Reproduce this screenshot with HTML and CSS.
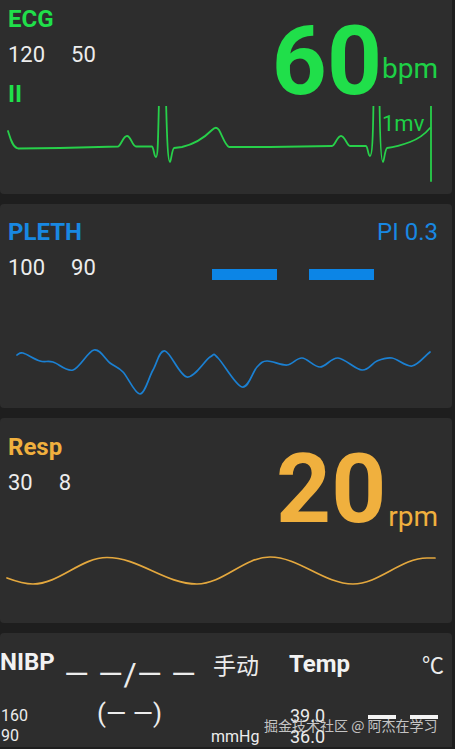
FILE: index.html
```html
<!DOCTYPE html>
<html lang="zh">
<head>
<meta charset="utf-8">
<title>Monitor</title>
<link rel="stylesheet" href="styles.css">
</head>
<body>
<div class="screen">
  <section class="panel ecg">
    <div class="top">
      <div class="labels">
        <div class="title green">ECG</div>
        <div class="limits"><span>120</span><span>50</span></div>
        <div class="title green lead">II</div>
      </div>
      <div class="value green">
        <span class="big">60</span><span class="unit unit-bpm">bpm</span>
      </div>
    </div>
    <div class="wave ecg-wave">
      <svg width="452" height="76" viewBox="0 106 452 76">
        <path class="ecg-line" d="M8,131 C10,137 12,147 18,148.5 L60,148 L118,146.5 C121,146 123,136 127,136 C131,136 132,146 136,146.5 L152,146.5 C154,148 154,157 156,157 C158,157 158,140 159,100 L160,70 L165,70 L166,100 C167,140 168,162 170,162 C171,162 172,149 174,148 L182,147 C195,144 205,137 212,130 C215,127 217,127 219,130 C222,135 225,145 229,147 L270,147 L332,146 C335,146 337,136 341,136 C345,136 347,146 350,146 L366,146 C368,147 368,156 370,156 C372,156 373,140 373.5,100 L374,70 L379,70 L379.5,100 C380,140 381,162 383,162 C384,162 385,149 387,148 C395,147 402,145 410,142 C418,139 425,134 430,128"/>
        <path class="ecg-line" d="M431,106 L431,181"/>
      </svg>
      <span class="scale green">1mv</span>
    </div>
  </section>

  <section class="panel pleth">
    <div class="top">
      <div class="title blue">PLETH</div>
      <div class="pi blue">PI 0.3</div>
    </div>
    <div class="row">
      <div class="limits"><span>100</span><span>90</span></div>
      <div class="bars"><span class="bar"></span><span class="bar"></span></div>
    </div>
    <div class="wave pleth-wave">
      <svg width="452" height="60" viewBox="0 340 452 60">
        <path class="pleth-line" d="M17,355 C19,354.3 19.2,352 23,353 S35,359.5 40,361 S47.5,360.5 53,362 S66.2,372 73,370 S87.8,351.2 94,350 S105.2,359.3 110,363 S118,366.8 123,372 S135,394.3 140,394 S148.8,377.2 153,370 S159.3,349.8 165,351 S179.5,376 187,377 S204.8,360.2 210,357 S212.7,353 218,358 S235.5,385.5 242,387 S252.8,371.3 257,367 S262,361.3 267,361 S281.2,365.5 287,365 S296.5,357.7 302,358 S314,367 320,367 S331,357.5 338,358 S355.5,369.5 362,370 S372,363 377,361 S386.2,357.2 392,358 S405.7,367 412,366 S424,356.7 430,352"/>
      </svg>
    </div>
  </section>

  <section class="panel resp">
    <div class="top">
      <div class="labels">
        <div class="title orange">Resp</div>
        <div class="limits"><span>30</span><span>8</span></div>
      </div>
      <div class="value orange">
        <span class="big">20</span><span class="unit unit-rpm">rpm</span>
      </div>
    </div>
    <div class="wave resp-wave">
      <svg width="452" height="50" viewBox="0 545 452 50">
        <path class="resp-line" d="M7,578 C15,581 25,584 33,584 C59,584 81,557.5 107,557.5 C139,557.5 165,584 197,584 C223,584 244,557 270,557 C299,557 324,584 353,584 C379,584 401,558 427,558 L435,558"/>
      </svg>
    </div>
  </section>

  <section class="panel nibp">
    <div class="c1">
      <div class="title white">NIBP</div>
      <div class="small">
        <div>160</div>
        <div>90</div>
      </div>
    </div>
    <div class="c2">
      <div class="dash">— —/— —</div>
      <div class="paren">(— —)</div>
    </div>
    <div class="c3">
      <div class="manual">手动</div>
      <div class="mmhg">mmHg</div>
    </div>
    <div class="c4">
      <div class="title white">Temp</div>
      <div class="temps">
        <div>39.0</div>
        <div>36.0</div>
      </div>
    </div>
    <div class="c5">℃</div>
    <div class="watermark">掘金技术社区 @ <span class="hl">阿杰</span>在<span class="hl">学习</span></div>
  </section>
</div>
</body>
</html>
```

FILE: styles.css
```css
html, body {
  margin: 0;
  padding: 0;
  background: #1e1e1e;
  overflow: hidden;
}

body {
  width: 455px;
  height: 749px;
  font-family: Roboto, "Noto Sans", "Noto Sans CJK SC", sans-serif;
  color: #ececec;
}

.screen {
  display: flex;
  flex-direction: column;
  gap: 10px;
}

.panel {
  width: 452px;
  background: #2d2d2d;
  border-radius: 4px;
  box-sizing: border-box;
}

.green { color: #20df4a; }
.blue { color: #1888e2; }
.orange { color: #f0b03e; }
.white { color: #f2f2f2; }

.title {
  font: 700 24px/24px Roboto, sans-serif;
}

.limits {
  display: flex;
  gap: 26px;
  font: 400 22px/22px Roboto, sans-serif;
  color: #ececec;
}

.top {
  display: flex;
  justify-content: space-between;
  align-items: flex-start;
  padding: 0 14px 0 8px;
}

.value {
  display: flex;
  align-items: flex-start;
}

.big {
  font: 700 96px/96px Roboto, sans-serif;
}

.unit {
  font: 400 28px/28px Roboto, sans-serif;
}

.wave svg {
  display: block;
}

path {
  fill: none;
  stroke-linejoin: round;
  stroke-linecap: round;
}

/* ECG */
.ecg {
  height: 194px;
  border-top-left-radius: 0;
  border-top-right-radius: 0;
}

.ecg .top {
  height: 106px;
}

.ecg .labels {
  padding-top: 7px;
}

.ecg .limits {
  margin-top: 13px;
}

.ecg .lead {
  margin-top: 16px;
}

.ecg .big {
  margin-top: 13px;
}

.unit-bpm {
  margin-top: 55px;
  color: #1ed046;
}

.ecg-wave {
  position: relative;
  height: 76px;
}

.ecg-line {
  stroke: #27d04a;
  stroke-width: 1.8;
}

.scale {
  position: absolute;
  left: 382px;
  top: 7px;
  font: 400 22px/22px Roboto, sans-serif;
  color: #1ed046;
}

/* PLETH */
.pleth {
  height: 204px;
}

.pleth .top {
  padding-top: 16px;
}

.pi {
  font: 400 24px/24px Roboto, sans-serif;
}

.pleth .row {
  display: grid;
  grid-template-columns: 204px auto;
  align-items: start;
  padding-left: 8px;
  margin-top: 13px;
}

.bars {
  display: flex;
  gap: 32px;
  margin-top: 12px;
}

.bar {
  width: 65px;
  height: 11px;
  background: #0c85e6;
}

.pleth-wave {
  margin-top: 60px;
}

.pleth-line {
  stroke: #1b80d2;
  stroke-width: 1.7;
}

/* Resp */
.resp {
  height: 205px;
}

.resp .labels {
  padding-top: 17px;
}

.resp .limits {
  margin-top: 13px;
}

.resp .big {
  margin-top: 23px;
}

.unit-rpm {
  margin-top: 85px;
  margin-left: 2px;
}

.resp-wave {
  margin-top: 8px;
}

.resp-line {
  stroke: #e4a83e;
  stroke-width: 1.7;
}

/* NIBP / Temp */
.nibp {
  position: relative;
  flex: 1;
  height: 116px;
  display: flex;
  align-items: flex-start;
  color: #ececec;
  border-bottom-left-radius: 0;
  border-bottom-right-radius: 0;
}

.c1 {
  width: 64px;
  padding-top: 17px;
}

.small {
  margin-top: 32px;
  font: 400 16px/20px Roboto, sans-serif;
  padding-left: 1px;
}

.c2 {
  width: 131px;
  text-align: center;
  padding-top: 25px;
}

.dash {
  font: 400 32px/32px Roboto, sans-serif;
  white-space: nowrap;
  letter-spacing: 0.5px;
}

.paren {
  margin-top: 9px;
  font: 400 26px/28px Roboto, sans-serif;
  white-space: nowrap;
}

.c3 {
  margin-left: 16px;
  width: 78px;
  padding-top: 20px;
}

.manual {
  margin-left: 2px;
  font: 400 23px/23px "Noto Sans CJK SC", sans-serif;
}

.mmhg {
  margin-top: 51px;
  font: 400 16px/20px Roboto, sans-serif;
}

.c4 {
  flex: 1;
  padding-top: 19px;
}

.temps {
  margin-top: 29px;
  padding-left: 1px;
  font: 400 18px/21px Roboto, sans-serif;
}

.c5 {
  padding: 19px 8px 0 0;
  font: 400 22px/22px "Noto Sans CJK SC", sans-serif;
}

.watermark {
  position: absolute;
  left: 264px;
  top: 84px;
  font: 400 14px/16px "Noto Sans CJK SC", sans-serif;
  color: rgba(225, 225, 225, 0.85);
  white-space: nowrap;
}

.hl {
  background: linear-gradient(#f4f4f4 0 4px, transparent 4px);
}
```
